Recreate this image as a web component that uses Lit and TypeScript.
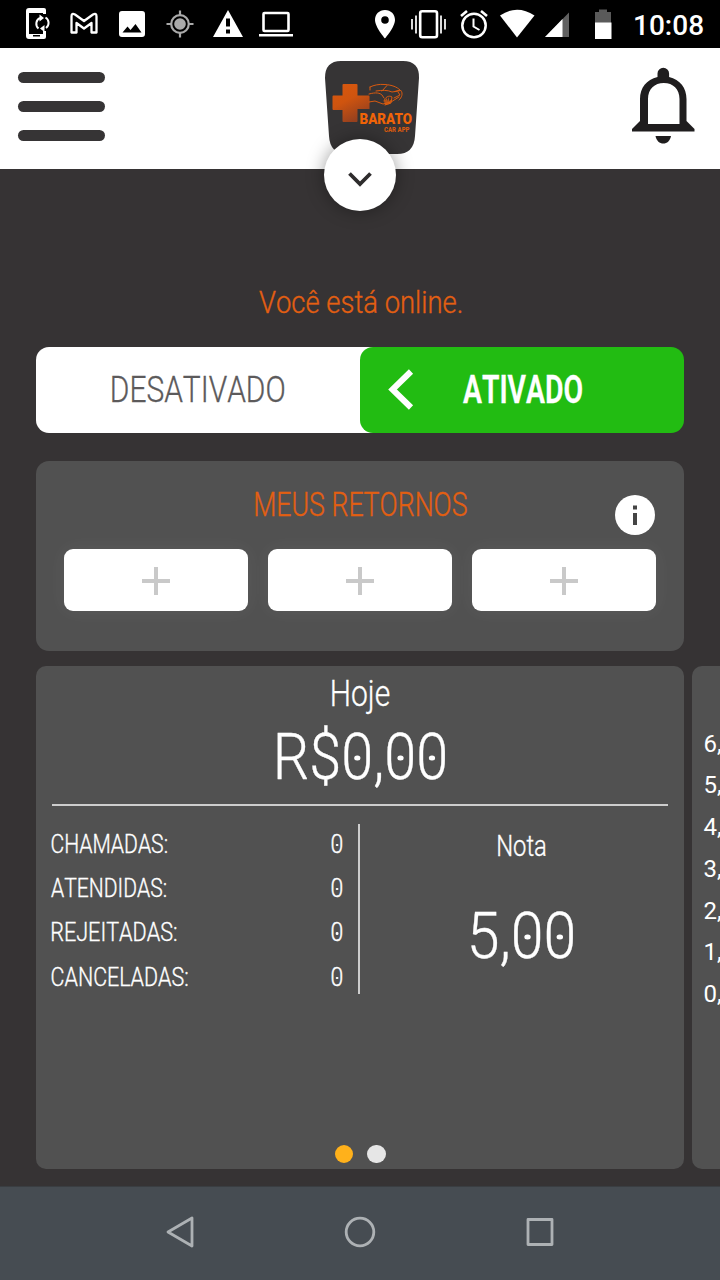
import { LitElement, html, css, svg } from "lit";
import { customElement, property } from "lit/decorators.js";

/** A single line of text condensed to a given ink width, with dotted zeros. */
@customElement("fit-label")
class FitLabel extends LitElement {
  @property() text = "";
  @property({ type: Number }) w = 100;

  static styles = css`
    :host { display: block; white-space: nowrap; font-kerning: none; }
    .run { display: inline-block; transform-origin: 0 50%; white-space: pre; }
    .zero { position: relative; display: inline-block; }
    .zero::after {
      content: ""; position: absolute; left: 50%; top: 50%;
      width: 0.11em; height: 0.085em; border-radius: 50%; background: currentColor;
      transform: translate(-50%, -45%);
    }
  `;

  updated() {
    this.style.width = `${this.w}px`;
    this.fit();
    document.fonts.ready.then(() => this.fit());
  }

  private fit() {
    const run = this.renderRoot.querySelector(".run") as HTMLElement;
    const cs = getComputedStyle(run);
    const ctx = document.createElement("canvas").getContext("2d")!;
    ctx.font = `${cs.fontWeight} ${cs.fontSize} ${cs.fontFamily}`;
    (ctx as any).fontKerning = "none";
    const m = ctx.measureText(this.text);
    const left = m.actualBoundingBoxLeft / 2;
    const scale = this.w / (left + m.actualBoundingBoxRight);
    run.style.transform = `translateX(${left * scale}px) scaleX(${scale})`;
  }

  render() {
    return html`<span class="run">${[...this.text].map((c) => (c === "0" ? html`<span class="zero">0</span>` : c))}</span>`;
  }
}

const cell = (x: number, w: number, body: unknown) =>
  html`<svg width=${w} height="48" viewBox="${x} 0 ${w} 48" fill="#fff">${body}</svg>`;

@customElement("status-bar")
class StatusBar extends LitElement {
  static styles = css`
    :host { display: flex; justify-content: space-between; height: 48px; background: #000; color: #fff; }
    .group { display: flex; }
    .time { font: 500 28px/51px Roboto, sans-serif; width: 72px; margin: 0 15px 0 10px; white-space: nowrap; }
    svg { display: block; }
  `;
  render() {
    return html`
      <div class="group">
        ${cell(0, 60, svg`<path fill-rule="evenodd" d="M29 8h15q2 0 2 2v4h-3v-1H29v21h14v-3h3v6q0 2-2 2H29q-3 0-3-3V11q0-3 3-3zm4 27v1.500h7V35z"/>
          <path d="M34 14h12v17h-7z" fill="#000"/>
          <path d="M38.500 28.500a6.300 6.300 0 0 1 1.500-10.500M45.500 17.500a6.300 6.300 0 0 1 .500 10.500" fill="none" stroke="#fff" stroke-width="2"/><path d="M39.500 14.500l4.500 3.500-4.500 3.500zM44.500 25v7l-4.500-3.500z"/>`)}
        ${cell(60, 48, svg`<path d="M71.500 32.500V16.500q0-4 3.500-2l9 6.500 9-6.500q3.500-2 3.500 2v16h-5V23l-7.500 5.500-7.500-5.500v9.500z" fill="none" stroke="#fff" stroke-width="2.300" stroke-linejoin="round"/>`)}
        ${cell(108, 48, svg`<path fill-rule="evenodd" d="M122 11h20q3 0 3 3v20q0 3-3 3h-20q-3 0-3-3V14q0-3 3-3zm.500 21.500h19l-6-8.500-5 6-3-3.500z"/>`)}
        ${cell(156, 48, svg`<g fill="none" stroke="#aaa" stroke-width="2.200"><circle cx="180" cy="24" r="8.800"/><path d="M180 10.500v5M180 32.500v5M166.500 24h5M188.500 24h5"/></g><circle cx="180" cy="24" r="5.800" fill="#aaa"/>`)}
        ${cell(204, 48, svg`<path fill-rule="evenodd" d="M228 10l15 27h-30zm-2 8.500v8h4v-8zm0 11v4h4v-4z"/>`)}
        ${cell(252, 48, svg`<rect x="263.500" y="13" width="25" height="18" rx="1" fill="none" stroke="#fff" stroke-width="2.600"/><path d="M259 34h34v2.500h-34z"/>`)}
      </div>
      <div class="group">
        ${cell(363, 44, svg`<path fill-rule="evenodd" d="M385 10c-5.800 0-10 4.300-10 10 0 7 10 18.500 10 18.500S395 27 395 20c0-5.700-4.200-10-10-10zm0 6.200a3.800 3.800 0 1 1 0 7.600 3.800 3.800 0 0 1 0-7.600z"/>`)}
        ${cell(407, 44, svg`<rect x="420.200" y="11.200" width="16.800" height="26" rx="2" fill="none" stroke="#fff" stroke-width="2.600"/><path d="M416 15.500v18M412 19v10.500M441 15.500v18M445 19v10.500" stroke="#fff" stroke-width="1.700"/>`)}
        ${cell(451, 44, svg`<g fill="none" stroke="#fff"><circle cx="474" cy="25.500" r="11.700" stroke-width="2.500"/><path d="M473.500 18.500v8l6 3.500" stroke-width="2"/><path d="M461 16l6-5M487 16l-6-5" stroke-width="2.600"/></g>`)}
        ${cell(495, 44, svg`<path d="M500 15.500q17-11.500 34.500 0L517 37.500z"/>`)}
        ${cell(539, 44, svg`<path d="M569 12.500V37h-24z" fill="#606060"/><path d="M562.500 19v18H545z"/>`)}
        ${cell(583, 40, svg`<path d="M599 9.500h8V12h4v11h-16V12h4z" fill="#5a5a5a"/><path d="M595 22.500h16.500V39H595z"/>`)}
        <span class="time">10:08</span>
      </div>`;
  }
}

@customElement("top-header")
class TopHeader extends LitElement {
  static styles = css`
    :host { display: grid; grid-template-columns: 312px 120px 188px 100px; height: 120.500px; background: #fff; position: relative; }
    svg { display: block; }
    .burger { display: flex; flex-direction: column; gap: 18.500px; padding: 24px 0 0 18px; }
    .burger i { width: 87px; height: 10.500px; border-radius: 6px; background: #363435; }
    .bell { grid-column: 4; }
    .fab {
      position: absolute; left: 324px; top: 91px; width: 72px; height: 72px; border-radius: 50%;
      background: #fff; box-shadow: 0 0 18px rgba(0, 0, 0, 0.38);
    }
    .logo { font-family: "Roboto", "Liberation Sans", sans-serif; font-weight: 900; }
  `;
  render() {
    return html`
      <div class="burger"><i></i><i></i><i></i></div>
      <svg class="logo" width="120" height="120" viewBox="312 48 120 120">
        <defs>
          <linearGradient id="g" x1="0" y1="0" x2=".5" y2="1"><stop offset="0" stop-color="#d9580e"/><stop offset=".5" stop-color="#cf540f"/><stop offset="1" stop-color="#98411e"/></linearGradient>
        </defs>
        <path d="M341 61h62q16.500 0 16 17l-4 58q-1 18-18 18h-50q-17 0-18-18l-4-58q0-17 16-17z" fill="#363435"/>
        <path d="M343.500 84h13q1 0 1 1v10.500h11q1 0 1 1V109h-12v12q0 1-1 1h-13q-1 0-1-1v-11h-9q-1 0-1-1V96.500q0-1 1-1h9V85q0-1 1-1z" fill="url(#g)"/>
        <path d="M370 87c4-2 9-3 15-2.500 7 .500 12 2.500 15 5.500l-5 1.500M370 87v3M382 91l5-5.500M376 91c6-1 12-1 16 1l9-1.500c2 3 1 7-2 9.500M369 94c7-2 11-1 13 1l2 3M369 102l6-1 8 3 8-2 8-5M384 101c1-4 5-6 8-4l-1 6-6 2M398 92l2 3-6 3" fill="none" stroke="#d85a10" stroke-width="1" stroke-linecap="round"/>
        <path d="M384 101l3-3v3l2-4v4l3-2-2 5-5 1z" fill="#e55f0b" opacity=".7"/>
        <text x="359.500" y="123.500" font-size="15.200" textLength="52.500" lengthAdjust="spacingAndGlyphs" fill="#f06408">BARATO</text>
        <text x="384" y="132" font-size="7.200" textLength="25.500" lengthAdjust="spacingAndGlyphs" fill="#d65a10">CAR APP</text>
      </svg>
      <svg class="bell" width="100" height="120" viewBox="620 48 100 120" fill="#1f1d1e">
        <path fill-rule="evenodd" d="M657.500 77v-3.500a5.800 5.800 0 0 1 11.600 0V77C680 79.500 686.500 88 686.500 99v22l8 8v2.500h-62.500V129l8-8V99c0-11 6.500-19.500 17.500-22zM648 124h31.500V99c0-10-6.500-16-15.700-16S648 89 648 99z"/>
        <path d="M655.500 136h15.500c-1 5-4 7.500-7.700 7.500s-6.800-2.500-7.800-7.500z"/>
      </svg>
      <div class="fab">
        <svg width="72" height="72" viewBox="324 139 72 72"><path d="M349.500 173.500l10.500 10.500 10.500-10.500" fill="none" stroke="#2e2c2d" stroke-width="3.800"/></svg>
      </div>`;
  }
}

@customElement("app-root")
class AppRoot extends LitElement {
  static styles = css`
    :host {
      display: flex; flex-direction: column; width: 720px; height: 1280px; overflow: hidden;
      background: #363334; color: #fff; font-family: Roboto, sans-serif; font-weight: 300;
    }
    * { box-sizing: border-box; }
    status-bar, top-header, nav { flex: none; }
    svg { display: block; }
    fit-label { -webkit-text-stroke: 0.35px currentColor; }
    main { flex: 1; min-height: 0; padding-top: 113.500px; }
    .orange { color: #e35f12; }
    .online { font-size: 32px; line-height: 40px; margin: 0 auto; }
    .toggle { display: flex; margin: 25px 36px 0; height: 86px; border-radius: 13px; background: linear-gradient(to right, #fff 60%, transparent 60%); line-height: 86px; }
    .off { width: 324px; padding-left: 75px; color: #5c5a5b; font-size: 37px; }
    .on { display: flex; width: 324px; border-radius: 13px; background: #22bc12; font-size: 38.500px; font-weight: 600; }
    .card { background: #515151; }
    .returns { margin: 28px 36px 0; height: 190px; border-radius: 13px; padding: 24px 28px 0; }
    .head { display: grid; grid-template-columns: 41px 1fr 41px; height: 64px; justify-items: center; }
    .head fit-label { font-size: 33px; line-height: 40px; grid-column: 2; }
    .info { margin-top: 10px; justify-self: start; }
    .slots { display: grid; grid-template-columns: repeat(3, 1fr); gap: 20px; }
    .slot { height: 62px; border-radius: 9px; background: #fff; display: grid; place-items: center; padding-top: 2px; box-shadow: 0 0 20px rgba(255, 255, 255, 0.06); }
    .carousel { display: flex; gap: 7.500px; margin: 14.500px 0 0 36px; height: 503.500px; overflow: hidden; }
    .today { flex: none; width: 648px; border-radius: 10px; display: flex; flex-direction: column; align-items: center; padding-top: 6.500px; }
    .hoje { font-size: 36.500px; line-height: 44px; }
    .money { font-size: 64px; line-height: 70px; margin-top: 7px; }
    .rule { width: 616px; height: 2px; background: #cdcdcd; margin-top: 11px; }
    .split { display: flex; width: 100%; }
    .counts { width: 324px; height: 170px; margin-top: 18px; border-right: 2px solid #cdcdcd; padding: 0 15.500px 0 15px; }
    .row { display: flex; justify-content: space-between; font-size: 25px; line-height: 44.200px; height: 44.200px; position: relative; top: -1px; }
    .score { flex: 1; display: flex; flex-direction: column; align-items: center; padding: 22px 2px 0 0; }
    .nota { font-size: 29px; line-height: 36px; }
    .five { font-size: 64px; line-height: 70px; margin-top: 38px; }
    .dots { display: flex; gap: 14px; margin: auto 0 6px; }
    .dot { width: 18.500px; height: 18.500px; border-radius: 50%; background: #e6e6e6; }
    .dot.sel { background: #ffb11b; }
    .chart { flex: none; width: 648px; border-radius: 10px; padding: 58px 0 0 12px; font-size: 24px; font-weight: 400; line-height: 41.800px; }
    nav { display: flex; justify-content: center; height: 94px; background: #464c52; border-top: 1px solid #3a3e42; }
  `;

  private counts: [string, number][] = [
    ["CHAMADAS:", 116], ["ATENDIDAS:", 115], ["REJEITADAS:", 125.5], ["CANCELADAS:", 136.5],
  ];

  render() {
    return html`
      <status-bar></status-bar>
      <top-header></top-header>
      <main>
        <fit-label class="online orange" text="Você está online." w="202"></fit-label>
        <div class="toggle">
          <div class="off"><fit-label text="DESATIVADO" w="173"></fit-label></div>
          <div class="on">
            <svg width="103" height="86" viewBox="360 347 103 86"><path d="M411 371.500L392.500 389.500l18.500 18" fill="none" stroke="#fff" stroke-width="6"/></svg>
            <fit-label text="ATIVADO" w="119"></fit-label>
          </div>
        </div>
        <section class="card returns">
          <div class="head">
            <fit-label class="orange" text="MEUS RETORNOS" w="213"></fit-label>
            <svg class="info" width="40" height="40" viewBox="0 0 40 40"><circle cx="20" cy="20" r="20" fill="#fff"/><path d="M18 10.500h4v4h-4zM18 18h4v12h-4z" fill="#454545"/></svg>
          </div>
          <div class="slots">
            ${[0, 1, 2].map(() => html`<div class="slot"><svg width="28" height="28"><path d="M0 14h28M14 0v28" stroke="#c9c9c9" stroke-width="4"/></svg></div>`)}
          </div>
        </section>
        <div class="carousel">
          <section class="card today">
            <fit-label class="hoje" text="Hoje" w="58.5"></fit-label>
            <fit-label class="money" text="R$0,00" w="170"></fit-label>
            <div class="rule"></div>
            <div class="split">
              <div class="counts">
                ${this.counts.map(([t, w]) => html`<div class="row"><fit-label text=${t} w=${w}></fit-label><fit-label text="0" w="11.5"></fit-label></div>`)}
              </div>
              <div class="score">
                <fit-label class="nota" text="Nota" w="48.5"></fit-label>
                <fit-label class="five" text="5,00" w="104"></fit-label>
              </div>
            </div>
            <div class="dots"><i class="dot sel"></i><i class="dot"></i></div>
          </section>
          <section class="card chart">
            ${["6,", "5,", "4,", "3,", "2,", "1,", "0,"].map((t) => html`<div>${t}</div>`)}
          </section>
        </div>
      </main>
      <nav>
        <svg width="400" height="93" viewBox="160 1187 400 93" fill="none" stroke="#adb1b4" stroke-width="2.800" stroke-linejoin="round">
          <path d="M192 1218v28l-24-14z"/><circle cx="360" cy="1232" r="13.800"/><rect x="528" y="1219.500" width="24" height="25"/>
        </svg>
      </nav>`;
  }
}
